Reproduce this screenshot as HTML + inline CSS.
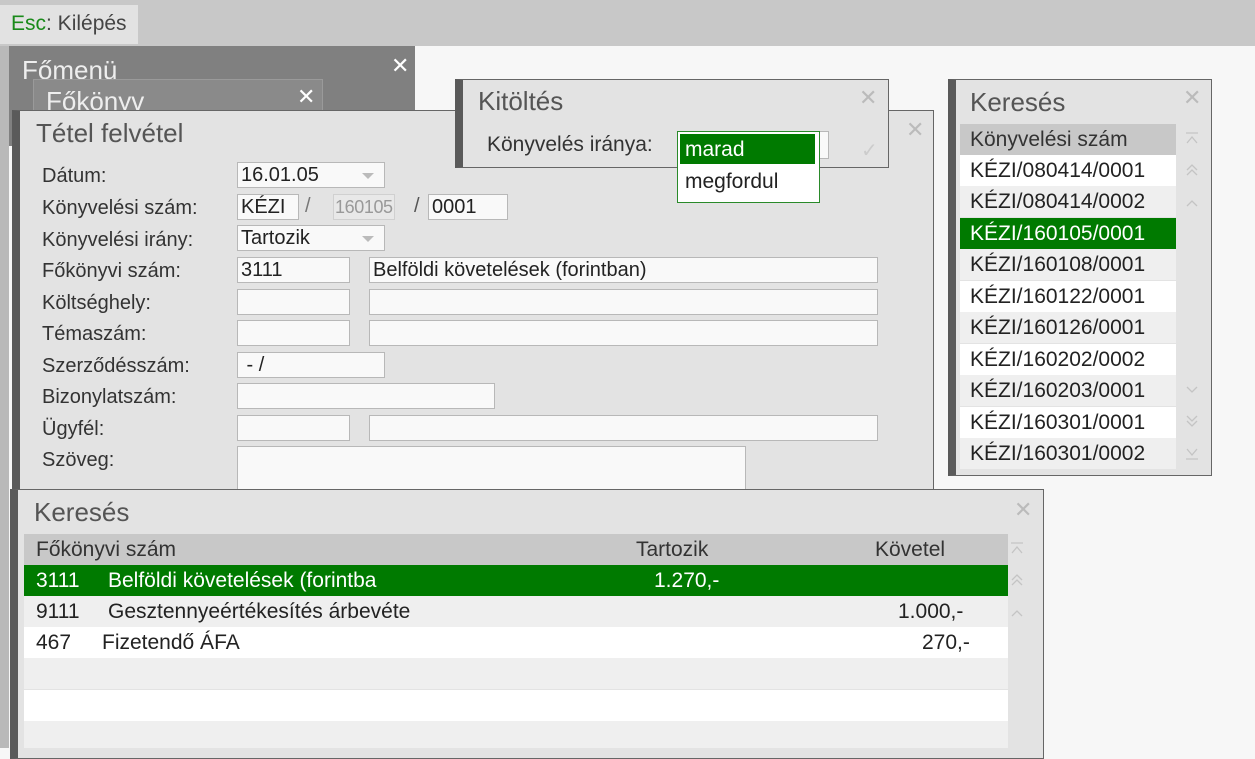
<!DOCTYPE html>
<html><head><meta charset="utf-8"><style>
*{margin:0;padding:0;box-sizing:border-box}
body{width:1255px;height:748px;overflow:hidden;background:#f7f7f7;font-family:"Liberation Sans",Arial,sans-serif;position:relative;color:#333}
.a{position:absolute}
.top{left:0;top:0;width:1255px;height:46px;background:#c8c8c8}
.tab{left:0;top:5px;width:138px;height:39px;background:#e2e2e2;font-size:21px;padding:7px 0 0 11px;color:#444;line-height:24px}
.win{background:#e3e3e3;border:1px solid #666;border-left:8px solid #5a5a5a}
.fld{position:absolute;background:#f9f9f9;border:1px solid #b8b8b8;height:26px;font-size:20px;line-height:24px;padding:0 0 0 3px;color:#222;white-space:nowrap;overflow:hidden}
.lbl{position:absolute;left:42px;font-size:20px;color:#333;line-height:24px}
.x{position:absolute;color:#bbb;font-size:22px}
.row{position:absolute;height:31px;font-size:21px;line-height:24px;padding-top:4px;color:#222;white-space:nowrap}
.tri{position:absolute;right:10px;top:10px;width:0;height:0;border-left:6px solid transparent;border-right:6px solid transparent;border-top:6px solid #bbb}
.ttl{position:absolute;font-size:26px;color:#555;line-height:30px}
svg.s{position:absolute;width:14px;height:14px}
</style></head><body>
<div class="a top"></div>
<div class="a tab"><span style="color:#1a8a1a">Esc</span>: Kilépés</div>
<div class="a" style="left:0;top:46px;width:9px;height:702px;background:#b9b9b9"></div>
<div class="a" style="left:9px;top:46px;width:406px;height:100px;background:#808080"></div>
<div class="a" style="left:22px;top:55px;color:#eee;font-size:26px;line-height:30px">Főmenü</div>
<div class="a" style="left:391px;top:53px;color:#fff;font-size:22px">✕</div>
<div class="a" style="left:33px;top:79px;width:290px;height:60px;background:#8a8a8a;border:1px solid #9a9a9a"></div>
<div class="a" style="left:46px;top:86px;color:#eee;font-size:26px;line-height:30px">Főkönyv</div>
<div class="a" style="left:297px;top:84px;color:#fff;font-size:22px">✕</div>

<div class="a win" style="left:12px;top:110px;width:922px;height:400px"></div>
<div class="ttl" style="left:36px;top:118px">Tétel felvétel</div>
<div class="x" style="left:906px;top:117px">✕</div>
<div class="lbl" style="top:164px">Dátum:</div>
<div class="lbl" style="top:196px">Könyvelési szám:</div>
<div class="lbl" style="top:228px">Könyvelési irány:</div>
<div class="lbl" style="top:259px">Főkönyvi szám:</div>
<div class="lbl" style="top:291px">Költséghely:</div>
<div class="lbl" style="top:322px">Témaszám:</div>
<div class="lbl" style="top:354px">Szerződésszám:</div>
<div class="lbl" style="top:385px">Bizonylatszám:</div>
<div class="lbl" style="top:417px">Ügyfél:</div>
<div class="lbl" style="top:448px">Szöveg:</div>
<div class="fld" style="left:237px;top:162px;width:148px">16.01.05<span class="tri"></span></div>
<div class="fld" style="left:237px;top:194px;width:62px">KÉZI</div>
<div class="a" style="left:305px;top:195px;font-size:20px;color:#777">/</div>
<div class="fld" style="left:333px;top:194px;width:62px;background:#e8e8e8;border-color:#d0d0d0;color:#999;padding-left:1px;font-size:18px;letter-spacing:-0.4px">160105</div>
<div class="a" style="left:414px;top:195px;font-size:20px;color:#555">/</div>
<div class="fld" style="left:428px;top:194px;width:80px">0001</div>
<div class="fld" style="left:237px;top:225px;width:148px">Tartozik<span class="tri"></span></div>
<div class="fld" style="left:237px;top:257px;width:113px">3111</div>
<div class="fld" style="left:369px;top:257px;width:509px">Belföldi követelések (forintban)</div>
<div class="fld" style="left:237px;top:289px;width:113px"></div>
<div class="fld" style="left:369px;top:289px;width:509px"></div>
<div class="fld" style="left:237px;top:320px;width:113px"></div>
<div class="fld" style="left:369px;top:320px;width:509px"></div>
<div class="fld" style="left:237px;top:352px;width:148px">&nbsp;- /</div>
<div class="fld" style="left:237px;top:383px;width:258px"></div>
<div class="fld" style="left:237px;top:415px;width:113px"></div>
<div class="fld" style="left:369px;top:415px;width:509px"></div>
<div class="fld" style="left:237px;top:446px;width:509px;height:50px"></div>

<div class="a win" style="left:455px;top:79px;width:434px;height:89px"></div>
<div class="ttl" style="left:478px;top:86px">Kitöltés</div>
<div class="x" style="left:859px;top:85px">✕</div>
<div class="a" style="left:487px;top:133px;font-size:21px;line-height:24px;color:#333">Könyvelés iránya:</div>
<div class="fld" style="left:677px;top:131px;width:152px;height:28px"></div>
<div class="a" style="left:861px;top:138px;color:#ccc;font-size:20px">✓</div>
<div class="a" style="left:677px;top:131px;width:143px;height:72px;background:#fff;border:1px solid #2a8a2a"></div>
<div class="a" style="left:680px;top:134px;width:135px;height:30px;background:#007a00;color:#fff;font-size:21px;line-height:24px;padding:4px 0 0 5px">marad</div>
<div class="a" style="left:685px;top:170px;font-size:21px;line-height:24px;color:#222">megfordul</div>

<div class="a win" style="left:948px;top:79px;width:264px;height:397px"></div>
<div class="ttl" style="left:970px;top:87px">Keresés</div>
<div class="x" style="left:1183px;top:85px">✕</div>
<div class="row" style="left:960px;top:124px;width:216px;background:#c8c8c8;padding-left:10px;color:#333">Könyvelési szám</div>
<div class="row" style="left:960px;top:155px;width:216px;background:#fff;padding-left:10px">KÉZI/080414/0001</div>
<div class="row" style="left:960px;top:186px;width:216px;background:#efefef;padding-left:10px">KÉZI/080414/0002</div>
<div class="row" style="left:960px;top:218px;width:216px;background:#007a00;color:#fff;padding-left:10px">KÉZI/160105/0001</div>
<div class="row" style="left:960px;top:249px;width:216px;background:#efefef;padding-left:10px">KÉZI/160108/0001</div>
<div class="row" style="left:960px;top:281px;width:216px;background:#fff;padding-left:10px">KÉZI/160122/0001</div>
<div class="row" style="left:960px;top:312px;width:216px;background:#efefef;padding-left:10px">KÉZI/160126/0001</div>
<div class="row" style="left:960px;top:344px;width:216px;background:#fff;padding-left:10px">KÉZI/160202/0002</div>
<div class="row" style="left:960px;top:375px;width:216px;background:#efefef;padding-left:10px">KÉZI/160203/0001</div>
<div class="row" style="left:960px;top:407px;width:216px;background:#fff;padding-left:10px">KÉZI/160301/0001</div>
<div class="row" style="left:960px;top:438px;width:216px;background:#efefef;padding-left:10px">KÉZI/160301/0002</div>
<svg class="s" style="left:1185px;top:132px" viewBox="0 0 14 14" fill="none" stroke="#c4c4c4" stroke-width="1.3"><path d="M1 1H13M2 11L7 5L12 11"/></svg>
<svg class="s" style="left:1185px;top:163px" viewBox="0 0 14 14" fill="none" stroke="#c4c4c4" stroke-width="1.3"><path d="M2 7L7 2L12 7M2 12L7 7L12 12"/></svg>
<svg class="s" style="left:1185px;top:196px" viewBox="0 0 14 14" fill="none" stroke="#c4c4c4" stroke-width="1.3"><path d="M2 10L7 5L12 10"/></svg>
<svg class="s" style="left:1185px;top:383px" viewBox="0 0 14 14" fill="none" stroke="#c4c4c4" stroke-width="1.3"><path d="M2 4L7 9L12 4"/></svg>
<svg class="s" style="left:1185px;top:414px" viewBox="0 0 14 14" fill="none" stroke="#c4c4c4" stroke-width="1.3"><path d="M2 2L7 7L12 2M2 7L7 12L12 7"/></svg>
<svg class="s" style="left:1185px;top:446px" viewBox="0 0 14 14" fill="none" stroke="#c4c4c4" stroke-width="1.3"><path d="M2 3L7 9L12 3M1 13H13"/></svg>

<div class="a win" style="left:10px;top:489px;width:1034px;height:270px"></div>
<div class="ttl" style="left:34px;top:497px">Keresés</div>
<div class="x" style="left:1014px;top:497px">✕</div>
<div class="row" style="left:24px;top:534px;width:984px;background:#c8c8c8;color:#333"><span class="a" style="left:12px">Főkönyvi szám</span><span class="a" style="left:612px">Tartozik</span><span class="a" style="left:851px">Követel</span></div>
<div class="row" style="left:24px;top:565px;width:984px;background:#007a00;color:#fff"><span class="a" style="left:12px">3111</span><span class="a" style="left:84px">Belföldi követelések (forintba</span><span class="a" style="left:630px">1.270,-</span></div>
<div class="row" style="left:24px;top:596px;width:984px;background:#efefef"><span class="a" style="left:12px">9111</span><span class="a" style="left:84px">Gesztennyeértékesítés árbevéte</span><span class="a" style="left:874px">1.000,-</span></div>
<div class="row" style="left:24px;top:627px;width:984px;background:#fff"><span class="a" style="left:12px">467</span><span class="a" style="left:78px">Fizetendő ÁFA</span><span class="a" style="left:898px">270,-</span></div>
<div class="row" style="left:24px;top:658px;width:984px;background:#efefef"></div>
<div class="row" style="left:24px;top:690px;width:984px;background:#fff"></div>
<div class="row" style="left:24px;top:721px;width:984px;height:27px;background:#efefef"></div>
<svg class="s" style="left:1010px;top:542px" viewBox="0 0 14 14" fill="none" stroke="#c4c4c4" stroke-width="1.3"><path d="M1 1H13M2 11L7 5L12 11"/></svg>
<svg class="s" style="left:1010px;top:573px" viewBox="0 0 14 14" fill="none" stroke="#c4c4c4" stroke-width="1.3"><path d="M2 7L7 2L12 7M2 12L7 7L12 12"/></svg>
<svg class="s" style="left:1010px;top:606px" viewBox="0 0 14 14" fill="none" stroke="#c4c4c4" stroke-width="1.3"><path d="M2 10L7 5L12 10"/></svg>
</body></html>
